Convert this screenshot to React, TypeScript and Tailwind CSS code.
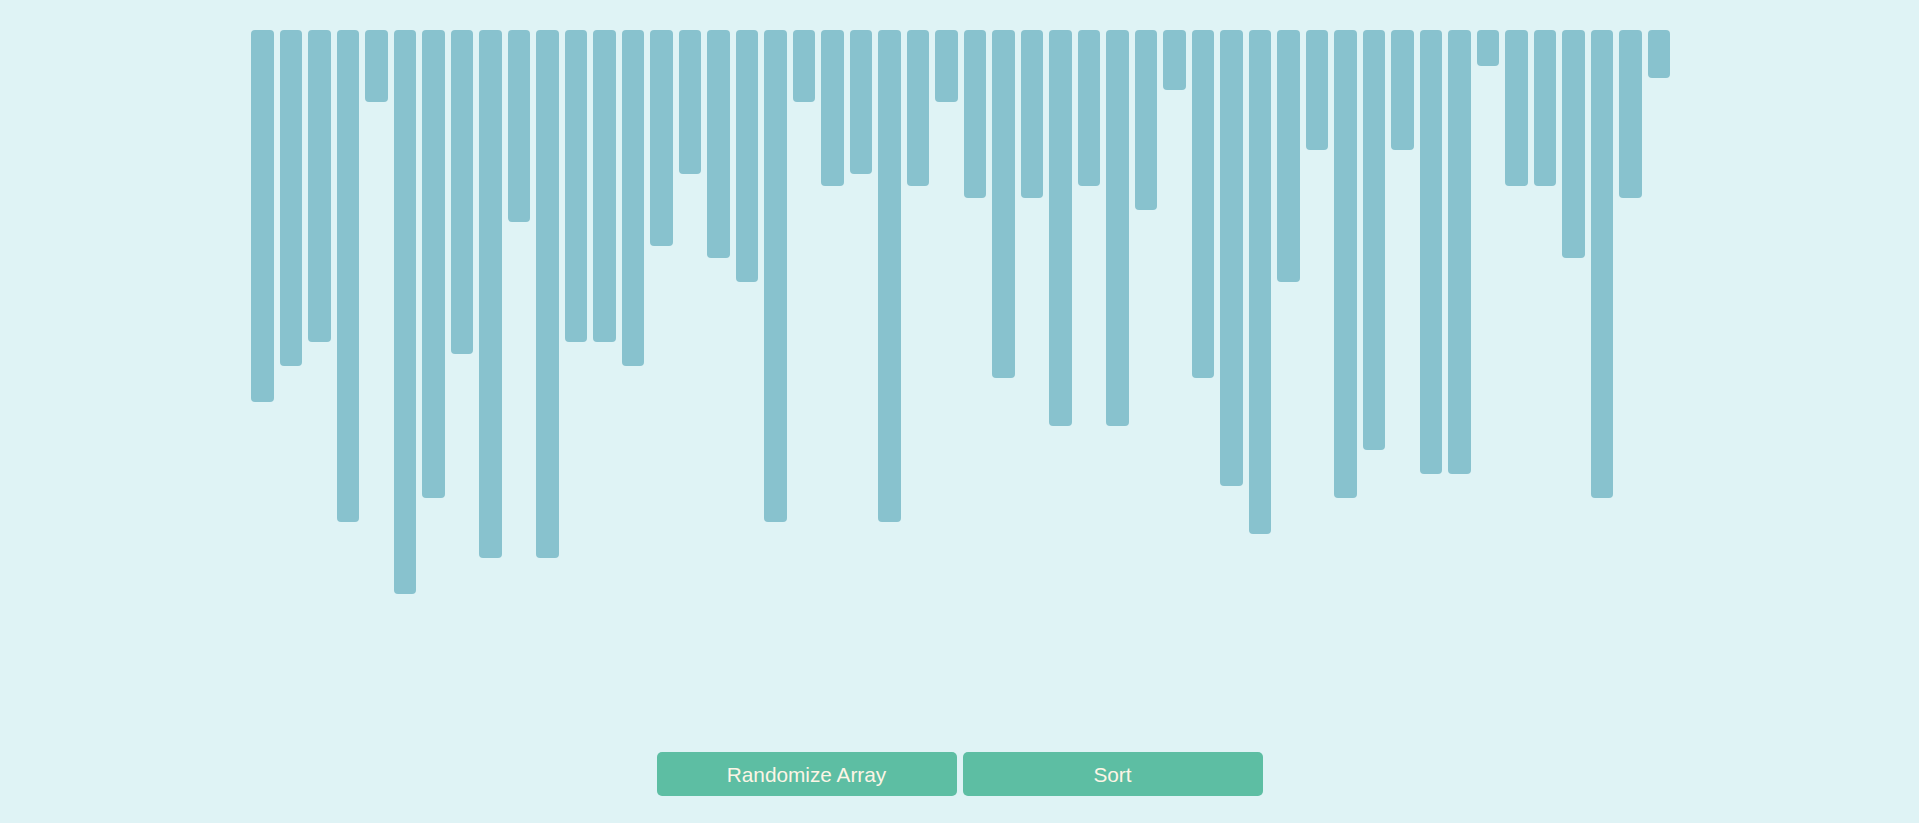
import React from "react";

const values = [
  31, 28, 26, 41, 6, 47, 39, 27, 44, 16, 44, 26, 26, 28, 18, 12, 19, 21, 41, 6,
  13, 12, 41, 13, 6, 14, 29, 14, 33, 13, 33, 15, 5, 29, 38, 42, 21, 10, 39, 35,
  10, 37, 37, 3, 13, 13, 19, 39, 14, 4,
];

export default function App() {
  return (
    <div
      className="flex h-[823px] w-full flex-col bg-[#dff3f5]"
      style={{ fontFamily: '"Liberation Sans", Arial, sans-serif' }}
    >
      <div className="mt-[30px] flex flex-1 items-start justify-center pl-[2px]">
        {values.map((v, i) => (
          <div
            key={i}
            className="mx-[3px] w-[22.5px] shrink-0 rounded-[4px] bg-[#88c2ce]"
            style={{ height: `${v * 12}px` }}
          />
        ))}
      </div>
      <div className="mb-[27px] flex justify-center">
        <button className="mx-[3px] flex h-[44px] w-[300px] items-center justify-center rounded-[5px] bg-[#5dbea3] pt-[2px] text-[20.8px] text-[#fdf5e6]">
          Randomize Array
        </button>
        <button className="mx-[3px] flex h-[44px] w-[300px] items-center justify-center rounded-[5px] bg-[#5dbea3] pt-[2px] text-[20.8px] text-[#fdf5e6]">
          Sort
        </button>
      </div>
    </div>
  );
}
